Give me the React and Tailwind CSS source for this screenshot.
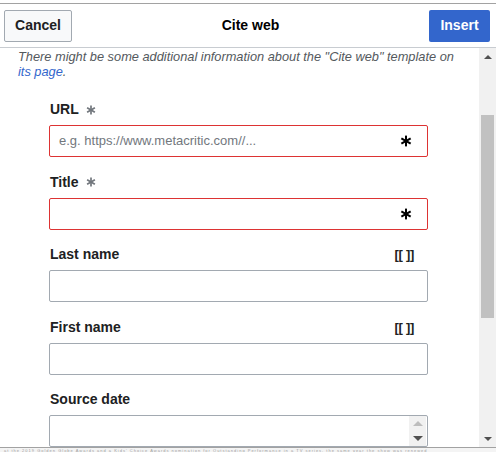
import React from "react";

const Asterisk = ({ className }) => (
  <svg viewBox="0 0 20 20" className={className} fill="none" stroke="currentColor" strokeWidth="3.4" strokeLinecap="butt">
    <line x1="10" y1="1" x2="10" y2="19" />
    <line x1="2.2" y1="5.5" x2="17.8" y2="14.5" />
    <line x1="2.2" y1="14.5" x2="17.8" y2="5.5" />
  </svg>
);

const Field = ({ label, required, wiki, placeholder, red, number }) => {
  return (
    <div className="mb-[16.5px]">
      <div className="flex justify-between items-start h-[24px] pl-px pr-[14px] leading-[17px] text-[14px] font-bold text-[#202122]">
        <div className="flex items-center gap-[7px]">
          <span>{label}</span>
          {required && <Asterisk className="w-[10px] h-[10px] text-[#72777d]" />}
        </div>
        {wiki && <span className="text-[13px] tracking-[-0.3px]">[[ ]]</span>}
      </div>
      <div
        className={`flex items-center h-8 rounded-[2px] border bg-white ${
          red ? "border-[#d33]" : "border-[#a2a9b1]"
        }`}
      >
        <div className="flex-1 pl-[9px] text-[13px] text-[#72777d]">{placeholder}</div>
        {required && <Asterisk className="w-[12px] h-[12px] mr-[15px] text-[#000]" />}
        {number && (
          <div className="flex flex-col justify-around items-center w-[17px] h-[30px] mr-px bg-[#f1f1f1]">
            <div className="w-0 h-0 border-x-[5px] border-x-transparent border-b-[5px] border-b-[#bdbdbd]" />
            <div className="w-0 h-0 border-x-[5px] border-x-transparent border-t-[5px] border-t-[#505050]" />
          </div>
        )}
      </div>
    </div>
  );
};

const App = () => {
  return (
    <div className="w-[496px] h-[452px] bg-white overflow-hidden flex flex-col font-['Liberation_Sans',Arial,sans-serif]">
      <div className="h-[3px] bg-white" />
      {/* header */}
      <div className="h-[45px] flex items-center justify-between px-1 border-t border-b border-t-[#a2a2a2] border-b-[#c8ccd1]">
        <button className="w-[68px] h-8 rounded-[2px] border border-[#a2a9b1] bg-[#f8f9fa] text-[14px] font-bold text-[#202122]">
          Cancel
        </button>
        <div className="text-[14px] font-bold text-[#000]">Cite web</div>
        <button className="w-[61px] h-8 mr-[2px] rounded-[2px] bg-[#3366cc] text-[14px] font-bold text-white">
          Insert
        </button>
      </div>

      {/* body */}
      <div className="flex flex-1 overflow-hidden">
        <div className="flex-1 overflow-hidden">
          <p className="px-[18px] pt-px text-[12.8px] leading-[15px] italic text-[#54595d]">
            There might be some additional information about the "Cite web" template on{" "}
            <span className="text-[#3366cc]">its page</span>.
          </p>
          <div className="ml-[49px] w-[379px] mt-[22px]">
            <Field label="URL" required red placeholder="e.g. https://www.metacritic.com//..." />
            <Field label="Title" required red />
            <Field label="Last name" wiki />
            <Field label="First name" wiki />
            <Field label="Source date" number />
          </div>
        </div>
        {/* scrollbar */}
        <div className="w-[17px] bg-[#f1f1f1] flex flex-col items-center">
          <div className="h-[17px] flex items-center justify-center">
            <div className="w-0 h-0 border-x-[4px] border-x-transparent border-b-[4px] border-b-[#505050]" />
          </div>
          <div className="mt-[50px] w-[13px] h-[203px] bg-[#c1c1c1]" />
          <div className="flex-1" />
          <div className="h-[17px] flex items-center justify-center">
            <div className="w-0 h-0 border-x-[4px] border-x-transparent border-t-[4px] border-t-[#505050]" />
          </div>
        </div>
      </div>

      {/* page behind */}
      <div className="h-[5px] border-t border-[#a2a2a2] bg-[#f4f4f4] overflow-hidden">
        <div className="pt-px px-1 text-[4px] leading-[4px] tracking-[1px] text-[#a0a0a0] whitespace-nowrap">
          at the 2019 Golden Globe Awards and a Kids' Choice Awards nomination for Outstanding Performance in a TV series, the same year the show was renewed
        </div>
      </div>
    </div>
  );
};

export default App;
